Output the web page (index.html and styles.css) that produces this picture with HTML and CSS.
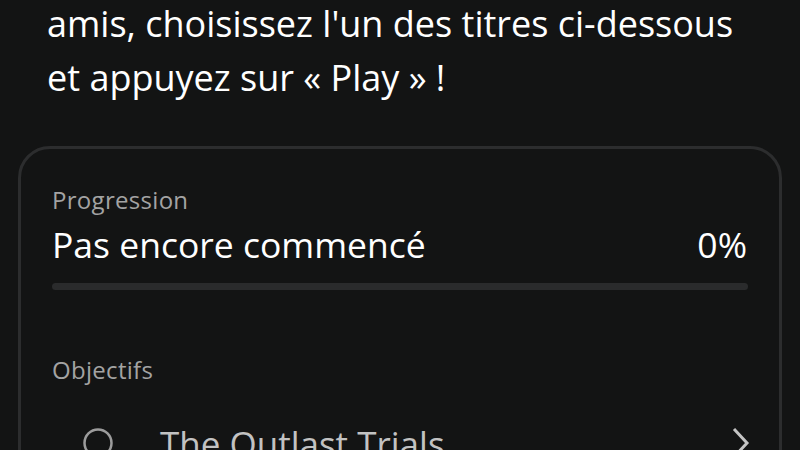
FILE: index.html
```html
<!DOCTYPE html>
<html lang="fr">
<head>
    <meta charset="UTF-8">
    <meta name="viewport" content="width=device-width, initial-scale=1.0">
    <title>Défi - Progression</title>
    <link rel="stylesheet" href="styles.css">
</head>
<body>
    <div class="page">
        <p class="intro">amis, choisissez l'un des titres ci-dessous<br>et appuyez sur « Play » !</p>

        <div class="card">
            <div class="label">Progression</div>
            <div class="progress-row">
                <span class="status">Pas encore commencé</span>
                <span class="percent">0%</span>
            </div>
            <div class="bar"><div class="bar-fill" style="width: 0%"></div></div>

            <div class="label objectives-label">Objectifs</div>
            <div class="objective">
                <svg class="check" width="30" height="30" viewBox="0 0 30 30">
                    <circle cx="15" cy="15" r="13.5" fill="none" stroke="#9c9c9c" stroke-width="2.5"/>
                </svg>
                <span class="objective-title">The Outlast Trials</span>
                <svg class="chevron" width="18" height="32" viewBox="0 0 18 32">
                    <polyline points="2,2 15,16 2,30" fill="none" stroke="#c4c4c4" stroke-width="3"/>
                </svg>
            </div>
        </div>
    </div>
</body>
</html>
```
FILE: styles.css
```css
body {
    margin: 0;
    padding: 0;
    background-color: #131414;
    color: #fff;
    font-family: "Open Sans", "Noto Sans", sans-serif;
    overflow: hidden;
}
.page {
    padding: 0 18px;
}
.intro {
    margin: -3px 0 41px;
    padding: 0 29px;
    font-size: 36px;
    line-height: 54px;
}
.card {
    border: 3px solid #2c2d2e;
    border-radius: 32px;
    padding: 36px 31px 40px;
}
.label {
    font-size: 24px;
    line-height: 30px;
    letter-spacing: 0.3px;
    color: #a3a3a3;
}
.progress-row {
    display: flex;
    justify-content: space-between;
    margin-top: 7px;
    font-size: 35.5px;
    line-height: 44px;
}
.percent {
    margin-right: 1px;
}
.bar {
    height: 7px;
    margin-top: 17px;
    border-radius: 4px;
    background-color: #2a2b2c;
    overflow: hidden;
}
.bar-fill {
    height: 100%;
    background-color: #fff;
}
.objectives-label {
    margin-top: 65px;
}
.objective {
    display: flex;
    align-items: center;
    height: 60px;
    margin-top: 28px;
}
.check {
    margin-left: 31px;
    flex-shrink: 0;
}
.objective-title {
    flex: 1;
    margin-left: 47px;
    font-size: 35px;
    color: #c2c2c2;
}
.chevron {
    margin-right: -2px;
    flex-shrink: 0;
}
```
